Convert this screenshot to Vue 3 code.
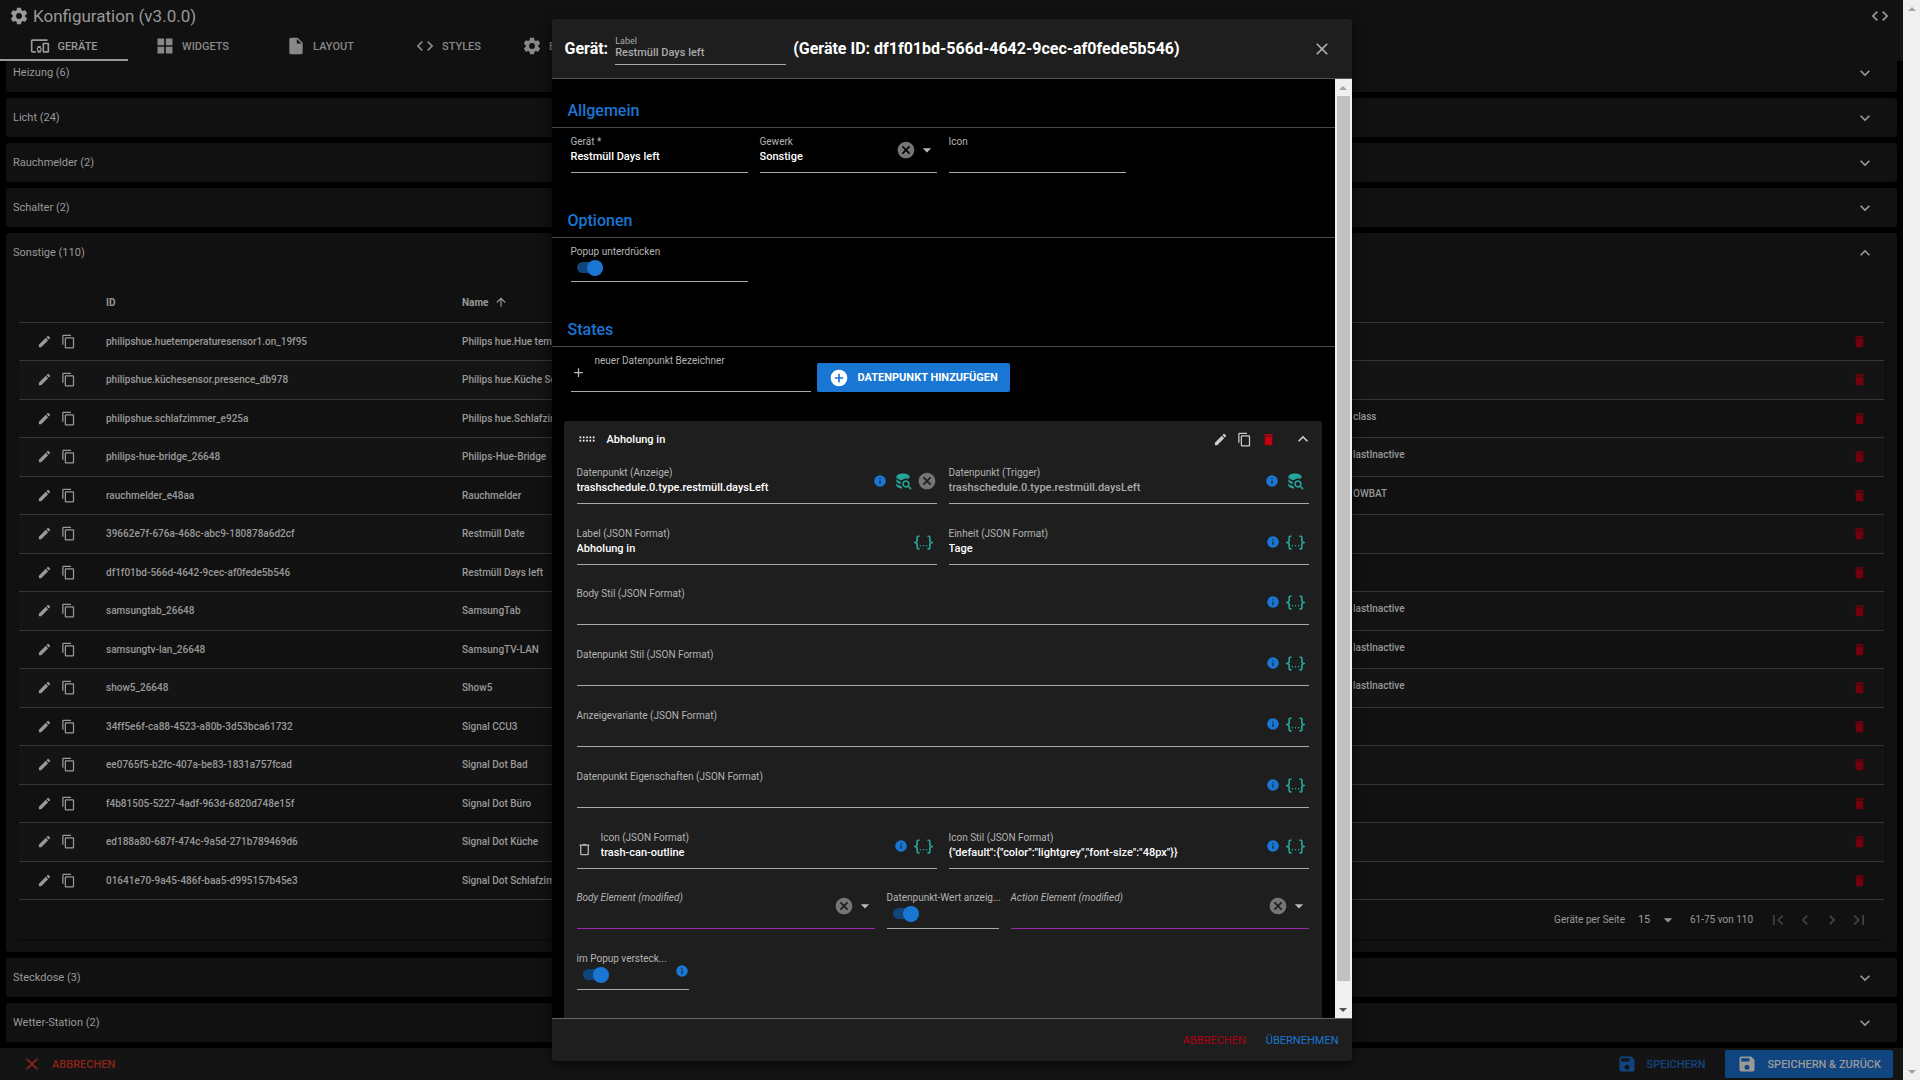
<script setup>
import { h, ref } from 'vue'

const paths = {
  cog: 'M12,15.5A3.5,3.5 0 0,1 8.5,12A3.5,3.5 0 0,1 12,8.5A3.5,3.5 0 0,1 15.5,12A3.5,3.5 0 0,1 12,15.5M19.43,12.97C19.47,12.65 19.5,12.33 19.5,12C19.5,11.67 19.47,11.34 19.43,11L21.54,9.37C21.73,9.22 21.78,8.95 21.66,8.73L19.66,5.27C19.54,5.05 19.27,4.96 19.05,5.05L16.56,6.05C16.04,5.66 15.5,5.32 14.87,5.07L14.5,2.42C14.46,2.18 14.25,2 14,2H10C9.75,2 9.54,2.18 9.5,2.42L9.13,5.07C8.5,5.32 7.96,5.66 7.44,6.05L4.95,5.05C4.73,4.96 4.46,5.05 4.34,5.27L2.34,8.73C2.21,8.95 2.27,9.22 2.46,9.37L4.57,11C4.53,11.34 4.5,11.67 4.5,12C4.5,12.33 4.53,12.65 4.57,12.97L2.46,14.63C2.27,14.78 2.21,15.05 2.34,15.27L4.34,18.73C4.46,18.95 4.73,19.03 4.95,18.95L7.44,17.94C7.96,18.34 8.5,18.68 9.13,18.93L9.5,21.58C9.54,21.82 9.75,22 10,22H14C14.25,22 14.46,21.82 14.5,21.58L14.87,18.93C15.5,18.67 16.04,18.34 16.56,17.94L19.05,18.95C19.27,19.03 19.54,18.95 19.66,18.73L21.66,15.27C21.78,15.05 21.73,14.78 21.54,14.63L19.43,12.97Z',
  devices: 'M3 6H21V4H3C1.9 4 1 4.9 1 6V18C1 19.1 1.9 20 3 20H7V18H3V6M13 12H9V13.78C8.39 14.33 8 15.11 8 16C8 16.89 8.39 17.67 9 18.22V20H13V18.22C13.61 17.67 14 16.88 14 16S13.61 14.33 13 13.78V12M11 17.5C10.17 17.5 9.5 16.83 9.5 16S10.17 14.5 11 14.5 12.5 15.17 12.5 16 11.83 17.5 11 17.5M22 8H16C15.5 8 15 8.5 15 9V19C15 19.5 15.5 20 16 20H22C22.5 20 23 19.5 23 19V9C23 8.5 22.5 8 22 8M21 18H17V10H21V18Z',
  grid: 'M3,11H11V3H3M3,21H11V13H3M13,21H21V13H13M13,3V11H21V3',
  file: 'M13,9V3.5L18.5,9M6,2C4.89,2 4,2.89 4,4V20A2,2 0 0,0 6,22H18A2,2 0 0,0 20,20V8L14,2H6Z',
  code: 'M14.6,16.6L19.2,12L14.6,7.4L16,6L22,12L16,18L14.6,16.6M9.4,16.6L4.8,12L9.4,7.4L8,6L2,12L8,18L9.4,16.6Z',
  down: 'M7.41,8.58L12,13.17L16.59,8.58L18,10L12,16L6,10L7.41,8.58Z',
  up: 'M7.41,15.41L12,10.83L16.59,15.41L18,14L12,8L6,14L7.41,15.41Z',
  left: 'M15.41,16.58L10.83,12L15.41,7.41L14,6L8,12L14,18L15.41,16.58Z',
  right: 'M8.59,16.58L13.17,12L8.59,7.41L10,6L16,12L10,18L8.59,16.58Z',
  first: 'M18.41,16.59L13.82,12L18.41,7.41L17,6L11,12L17,18L18.41,16.59M6,6H8V18H6V6Z',
  last: 'M5.59,7.41L10.18,12L5.59,16.59L7,18L13,12L7,6L5.59,7.41M16,6H18V18H16V6Z',
  arrowUp: 'M13,20H11V8L5.5,13.5L4.08,12.08L12,4.16L19.92,12.08L18.5,13.5L13,8V20Z',
  pencil: 'M20.71,7.04C21.1,6.65 21.1,6 20.71,5.63L18.37,3.29C18,2.9 17.35,2.9 16.96,3.29L15.12,5.12L18.87,8.87M3,17.25V21H6.75L17.81,9.93L14.06,6.18L3,17.25Z',
  copy: 'M19,21H8V7H19M19,5H8A2,2 0 0,0 6,7V21A2,2 0 0,0 8,23H19A2,2 0 0,0 21,21V7A2,2 0 0,0 19,5M16,1H4A2,2 0 0,0 2,3V17H4V3H16V1Z',
  trash: 'M19,4H15.5L14.5,3H9.5L8.5,4H5V6H19M6,19A2,2 0 0,0 8,21H16A2,2 0 0,0 18,19V7H6V19Z',
  trashOutline: 'M9,3V4H4V6H5V19A2,2 0 0,0 7,21H17A2,2 0 0,0 19,19V6H20V4H15V3H9M7,6H17V19H7V6Z',
  close: 'M19,6.41L17.59,5L12,10.59L6.41,5L5,6.41L10.59,12L5,17.59L6.41,19L12,13.41L17.59,19L19,17.59L13.41,12L19,6.41Z',
  plus: 'M19,13H13V19H11V13H5V11H11V5H13V11H19V13Z',
  plusCircle: 'M17,13H13V17H11V13H7V11H11V7H13V11H17M12,2A10,10 0 0,0 2,12A10,10 0 0,0 12,22A10,10 0 0,0 22,12A10,10 0 0,0 12,2Z',
  save: 'M15,9H5V5H15M12,19A3,3 0 0,1 9,16A3,3 0 0,1 12,13A3,3 0 0,1 15,16A3,3 0 0,1 12,19M17,3H5C3.89,3 3,3.9 3,5V19A2,2 0 0,0 5,21H19A2,2 0 0,0 21,19V7L17,3Z',
  info: 'M13,9H11V7H13M13,17H11V11H13M12,2A10,10 0 0,0 2,12A10,10 0 0,0 12,22A10,10 0 0,0 22,12A10,10 0 0,0 12,2Z',
  clear: 'M12,2C17.53,2 22,6.47 22,12C22,17.53 17.53,22 12,22C6.47,22 2,17.53 2,12C2,6.47 6.47,2 12,2M15.59,7L12,10.59L8.41,7L7,8.41L10.59,12L7,15.59L8.41,17L12,13.41L15.59,17L17,15.59L13.41,12L17,8.41L15.59,7Z',
  menuDown: 'M7,10L12,15L17,10H7Z',
  drag: 'M3,15V13H5V15H3M3,11V9H5V11H3M7,15V13H9V15H7M7,11V9H9V11H7M11,15V13H13V15H11M11,11V9H13V11H11M15,15V13H17V15H15M15,11V9H17V11H15M19,15V13H21V15H19M19,11V9H21V11H19Z',
  database: 'M18.68,12.32C16.92,10.56 14.07,10.57 12.32,12.33C10.56,14.09 10.56,16.94 12.32,18.69C13.81,20.17 16.11,20.43 17.89,19.32L21,22.39L22.39,21L19.3,17.89C20.43,16.12 20.17,13.8 18.68,12.32M17.27,17.27C16.29,18.25 14.71,18.24 13.73,17.27C12.76,16.29 12.76,14.71 13.74,13.73C14.71,12.76 16.29,12.76 17.27,13.73C18.24,14.71 18.24,16.29 17.27,17.27M10.9,20.1C10.25,19.44 9.74,18.65 9.42,17.78C6.27,17.25 4,15.76 4,14V17C4,19.21 7.58,21 12,21C11.6,20.74 11.23,20.44 10.9,20.1M4,9V12C4,13.68 6.07,15.12 9,15.7V15.5C9,14.57 9.2,13.65 9.58,12.81C6.34,12.3 4,10.79 4,9M12,3C7.58,3 4,4.79 4,7C4,9 7,10.68 10.85,11H10.9C12.1,9.74 13.76,9 15.5,9C16.41,9 17.31,9.19 18.14,9.56C19.17,9.09 19.87,8.12 20,7C20,4.79 16.42,3 12,3Z',
  json: 'M5,3H7V5H5V10A2,2 0 0,1 3,12A2,2 0 0,1 5,14V19H7V21H5C3.93,20.73 3,20.1 3,19V15A2,2 0 0,0 1,13H0V11H1A2,2 0 0,0 3,9V5A2,2 0 0,1 5,3M19,3A2,2 0 0,1 21,5V9A2,2 0 0,0 23,11H24V13H23A2,2 0 0,0 21,15V19A2,2 0 0,1 19,21H17V19H19V14A2,2 0 0,1 21,12A2,2 0 0,1 19,10V5H17V3H19M12,15A1,1 0 0,1 13,16A1,1 0 0,1 12,17A1,1 0 0,1 11,16A1,1 0 0,1 12,15M8,15A1,1 0 0,1 9,16A1,1 0 0,1 8,17A1,1 0 0,1 7,16A1,1 0 0,1 8,15M16,15A1,1 0 0,1 17,16A1,1 0 0,1 16,17A1,1 0 0,1 15,16A1,1 0 0,1 16,15Z'
}

const Icon = (props) =>
  h('svg', { viewBox: '0 0 24 24', width: props.size, height: props.size, fill: 'currentColor', 'aria-hidden': 'true' }, [
    h('path', { d: paths[props.name] })
  ])
Icon.props = { name: String, size: { type: Number, default: 20 } }

const tabs = [
  { icon: 'devices', label: 'GERÄTE' },
  { icon: 'grid', label: 'WIDGETS' },
  { icon: 'file', label: 'LAYOUT' },
  { icon: 'code', label: 'STYLES' },
  { icon: 'cog', label: 'EINSTELLUNGEN' }
]
const activeTab = ref('GERÄTE')

const groups = [
  { title: 'Heizung (6)' },
  { title: 'Licht (24)' },
  { title: 'Rauchmelder (2)' },
  { title: 'Schalter (2)' },
  { title: 'Sonstige (110)', open: true },
  { title: 'Steckdose (3)' },
  { title: 'Wetter-Station (2)' }
]

const devices = [
  ['philipshue.huetemperaturesensor1.on_19f95', 'Philips hue.Hue temperature', ''],
  ['philipshue.küchesensor.presence_db978', 'Philips hue.Küche Sensor', ''],
  ['philipshue.schlafzimmer_e925a', 'Philips hue.Schlafzimmer', 'class'],
  ['philips-hue-bridge_26648', 'Philips-Hue-Bridge', 'lastInactive'],
  ['rauchmelder_e48aa', 'Rauchmelder', 'OWBAT'],
  ['39662e7f-676a-468c-abc9-180878a6d2cf', 'Restmüll Date', ''],
  ['df1f01bd-566d-4642-9cec-af0fede5b546', 'Restmüll Days left', ''],
  ['samsungtab_26648', 'SamsungTab', 'lastInactive'],
  ['samsungtv-lan_26648', 'SamsungTV-LAN', 'lastInactive'],
  ['show5_26648', 'Show5', 'lastInactive'],
  ['34ff5e6f-ca88-4523-a80b-3d53bca61732', 'Signal CCU3', ''],
  ['ee0765f5-b2fc-407a-be83-1831a757fcad', 'Signal Dot Bad', ''],
  ['f4b81505-5227-4adf-963d-6820d748e15f', 'Signal Dot Büro', ''],
  ['ed188a80-687f-474c-9a5d-271b789469d6', 'Signal Dot Küche', ''],
  ['01641e70-9a45-486f-baa5-d995157b45e3', 'Signal Dot Schlafzimmer', '']
]

const jsonRow = (id, label) => ({
  fields: [{ id, label, value: '', span: 12, icons: ['info', 'json'] }]
})

const sections = [
  {
    title: 'Allgemein',
    rows: [{
      fields: [
        { id: 'geraet', label: 'Gerät *', value: 'Restmüll Days left', span: 3 },
        { id: 'gewerk', label: 'Gewerk', value: 'Sonstige', span: 3, type: 'select', icons: ['clear', 'menuDown'] },
        { id: 'icon', label: 'Icon', value: '', span: 3 }
      ]
    }]
  },
  {
    title: 'Optionen',
    rows: [{ fields: [{ id: 'popup', label: 'Popup unterdrücken', type: 'switch', span: 3 }] }]
  },
  {
    title: 'States',
    rows: [{
      action: 'DATENPUNKT HINZUFÜGEN',
      fields: [{ id: 'neu', label: 'neuer Datenpunkt Bezeichner', value: '', prepend: 'plus' }]
    }]
  },
  {
    card: 'Abholung in',
    rows: [
      {
        fields: [
          { id: 'dp-anzeige', label: 'Datenpunkt (Anzeige)', value: 'trashschedule.0.type.restmüll.daysLeft', span: 6, icons: ['info', 'database', 'clear'] },
          { id: 'dp-trigger', label: 'Datenpunkt (Trigger)', value: 'trashschedule.0.type.restmüll.daysLeft', span: 6, muted: true, icons: ['info', 'database'] }
        ]
      },
      {
        tight: true,
        fields: [
          { id: 'label-json', label: 'Label (JSON Format)', value: 'Abholung in', span: 6, icons: ['json'] },
          { id: 'einheit', label: 'Einheit (JSON Format)', value: 'Tage', span: 6, icons: ['info', 'json'] }
        ]
      },
      jsonRow('body-stil', 'Body Stil (JSON Format)'),
      jsonRow('dp-stil', 'Datenpunkt Stil (JSON Format)'),
      jsonRow('variante', 'Anzeigevariante (JSON Format)'),
      jsonRow('eigenschaften', 'Datenpunkt Eigenschaften (JSON Format)'),
      {
        tight: true,
        fields: [
          { id: 'icon-json', label: 'Icon (JSON Format)', value: 'trash-can-outline', span: 6, prepend: 'trashOutline', icons: ['info', 'json'] },
          { id: 'icon-stil', label: 'Icon Stil (JSON Format)', value: '{"default":{"color":"lightgrey","font-size":"48px"}}', span: 6, icons: ['info', 'json'] }
        ]
      },
      {
        fields: [
          { id: 'body-element', label: 'Body Element (modified)', value: '', span: 5, type: 'select', modified: true, icons: ['clear', 'menuDown'] },
          { id: 'wert', label: 'Datenpunkt-Wert anzeig...', type: 'switch', span: 2 },
          { id: 'action-element', label: 'Action Element (modified)', value: '', span: 5, type: 'select', modified: true, icons: ['clear', 'menuDown'] }
        ]
      },
      {
        fields: [{ id: 'versteckt', label: 'im Popup versteck...', type: 'switch', span: 2, icons: ['info'] }]
      }
    ]
  }
]

const iconSize = { info: 14, json: 19, database: 20, clear: 20 }
</script>

<template>
  <div class="app">
    <div class="page">
      <header class="topbar">
        <div class="brand">
          <Icon name="cog" />
          <h1>Konfiguration (v3.0.0)</h1>
          <button type="button" class="icon-btn code-btn" aria-label="Code"><Icon name="code" /></button>
        </div>
        <nav class="tabs">
          <button
            v-for="tab in tabs" :key="tab.label" type="button" class="tab"
            :class="{ active: tab.label === activeTab }" @click="activeTab = tab.label"
          >
            <Icon :name="tab.icon" /><span>{{ tab.label }}</span>
          </button>
        </nav>
      </header>

      <main class="content">
        <div class="groups">
          <section v-for="g in groups" :key="g.title" class="group">
            <button type="button" class="group-head">
              <span>{{ g.title }}</span><Icon :name="g.open ? 'up' : 'down'" />
            </button>
            <div v-if="g.open" class="table-card">
              <table>
                <colgroup><col class="c-tools"><col class="c-id"><col class="c-name"><col></colgroup>
                <thead>
                  <tr>
                    <th></th>
                    <th>ID</th>
                    <th><span class="sort">Name <Icon name="arrowUp" :size="14" /></span></th>
                    <th></th>
                  </tr>
                </thead>
                <tbody>
                  <tr v-for="d in devices" :key="d[0]">
                    <td>
                      <div class="tools">
                        <button type="button" class="icon-btn" aria-label="Bearbeiten"><Icon name="pencil" :size="15" /></button>
                        <button type="button" class="icon-btn" aria-label="Kopieren"><Icon name="copy" :size="15" /></button>
                      </div>
                    </td>
                    <td>{{ d[0] }}</td>
                    <td>{{ d[1] }}</td>
                    <td>
                      <div class="last">
                        <span>{{ d[2] }}</span>
                        <button type="button" class="icon-btn danger" aria-label="Löschen"><Icon name="trash" :size="15" /></button>
                      </div>
                    </td>
                  </tr>
                </tbody>
              </table>
              <div class="pager">
                <label for="per-page">Geräte per Seite</label>
                <span class="per-page">
                  <select id="per-page"><option>15</option></select>
                  <Icon name="menuDown" />
                </span>
                <span class="range">61-75 von 110</span>
                <button v-for="n in ['first', 'left', 'right', 'last']" :key="n" type="button" class="icon-btn page-btn" :aria-label="n">
                  <Icon :name="n" />
                </button>
              </div>
            </div>
          </section>
        </div>
      </main>

      <footer class="bottombar">
        <button type="button" class="flat cancel"><Icon name="close" /><span>ABBRECHEN</span></button>
        <button type="button" class="flat save"><Icon name="save" /><span>SPEICHERN</span></button>
        <button type="button" class="flat save-back"><Icon name="save" /><span>SPEICHERN &amp; ZURÜCK</span></button>
      </footer>

      <div class="overlay">
        <div class="dialog" role="dialog" aria-modal="true" aria-labelledby="dialog-title">
          <div class="dialog-head">
            <h2 id="dialog-title">Gerät:</h2>
            <div class="title-field">
              <label for="title-label">Label</label>
              <input id="title-label" type="text" value="Restmüll Days left">
            </div>
            <h2>(Geräte ID: df1f01bd-566d-4642-9cec-af0fede5b546)</h2>
            <button type="button" class="icon-btn close-btn" aria-label="Schließen"><Icon name="close" /></button>
          </div>

          <div class="dialog-body">
            <div class="form">
              <section v-for="(s, si) in sections" :key="si" :class="s.card ? 'card' : 'section'">
                <h3 v-if="s.title">{{ s.title }}</h3>
                <div v-else class="card-head">
                  <Icon name="drag" />
                  <h4>{{ s.card }}</h4>
                  <button type="button" class="icon-btn" aria-label="Bearbeiten"><Icon name="pencil" :size="15" /></button>
                  <button type="button" class="icon-btn" aria-label="Kopieren"><Icon name="copy" :size="15" /></button>
                  <button type="button" class="icon-btn danger" aria-label="Löschen"><Icon name="trash" :size="15" /></button>
                  <button type="button" class="icon-btn fold" aria-label="Einklappen"><Icon name="up" /></button>
                </div>

                <div class="rows">
                  <div v-for="(row, ri) in s.rows" :key="ri" class="row" :class="{ tight: row.tight, inline: row.action }">
                    <div
                      v-for="f in row.fields" :key="f.id" class="field"
                      :class="['span-' + (f.span || 0), f.type, { modified: f.modified, muted: f.muted }]"
                    >
                      <Icon v-if="f.prepend" :name="f.prepend" :size="15" class="prepend" />
                      <div class="control">
                        <label :for="f.id">{{ f.label }}</label>
                        <input v-if="f.type === 'switch'" :id="f.id" type="checkbox" role="switch" checked>
                        <select v-else-if="f.type === 'select'" :id="f.id"><option>{{ f.value }}</option></select>
                        <input v-else :id="f.id" type="text" :value="f.value">
                      </div>
                      <div v-if="f.icons" class="icons">
                        <template v-for="i in f.icons" :key="i">
                          <Icon v-if="i === 'menuDown'" :name="i" class="i-menuDown" />
                          <button v-else type="button" class="icon-btn" :class="'i-' + i" :aria-label="i">
                            <Icon :name="i" :size="iconSize[i]" />
                          </button>
                        </template>
                      </div>
                    </div>
                    <button v-if="row.action" type="button" class="add-btn"><Icon name="plusCircle" /><span>{{ row.action }}</span></button>
                  </div>
                </div>
              </section>
            </div>
            <div class="scrollbar" aria-hidden="true">
              <span class="arrow-up"></span>
              <span class="thumb"></span>
              <span class="arrow-down dark"></span>
            </div>
          </div>

          <div class="dialog-foot">
            <button type="button" class="text-btn danger">ABBRECHEN</button>
            <button type="button" class="text-btn primary">ÜBERNEHMEN</button>
          </div>
        </div>
      </div>
    </div>

    <div class="scrollbar" aria-hidden="true">
      <span class="arrow-up"></span>
      <span class="arrow-down"></span>
    </div>
  </div>
</template>

<style>
body { margin: 0; background: #000; }
</style>

<style scoped>
.app {
  display: flex;
  height: 100vh;
  overflow: hidden;
  background: #000;
  color: #999;
  font-family: Roboto, sans-serif;
  font-size: 11px;
}
.app *, .app *::before { box-sizing: border-box; }
button, input, select { font-family: inherit; font-size: inherit; color: inherit; background: none; border: 0; padding: 0; margin: 0; border-radius: 0; outline: 0; }
button { cursor: pointer; }
select { appearance: none; }
svg { display: block; flex: none; }
h1, h2, h3, h4 { margin: 0; }
.icon-btn { display: flex; align-items: center; justify-content: center; flex: none; }

.page { position: relative; display: flex; flex-direction: column; flex: 1; min-width: 0; }

.topbar { position: relative; height: 61px; flex: none; background: #111; }
.brand { display: flex; align-items: center; height: 31px; padding: 0 13px 0 9px; gap: 4px; }
.brand h1 { flex: 1; font-size: 17px; font-weight: 400; }
.tabs { display: flex; height: 30px; }
.tab { display: flex; align-items: center; justify-content: center; gap: 7px; min-width: 128px; padding: 2px 10px 0; font-weight: 500; color: #888; border-bottom: 2px solid transparent; }
.tab.active { color: #999; border-color: #999; }

.content { flex: 1; min-height: 0; overflow: hidden; padding: 0 6px; }
.groups { display: flex; flex-direction: column; gap: 6px; margin-top: -8px; }
.group { background: #111; border-radius: 3px; }
.group-head { display: flex; align-items: center; justify-content: space-between; width: 100%; height: 39px; padding: 0 22px 0 7px; }
.table-card { margin: 11px 13px 0; border-radius: 3px; box-shadow: 0 1px 2px #0008; }
.group:has(.table-card) { padding-bottom: 13px; }

table { width: 100%; table-layout: fixed; border-spacing: 0; font-size: 10px; }
.c-tools { width: 78px; }
.c-id { width: 356px; }
.c-name { width: 891px; }
th, td { height: 38px; padding: 0 8px 1px 9px; border-bottom: 1px solid #363636; text-align: left; white-space: nowrap; }
th { height: 40px; font-weight: 700; }
td { font-weight: 500; }
tbody tr:nth-child(even) { background: #141414; }
tbody tr:nth-child(even) td { height: 39px; padding-bottom: 2px; }
.sort { display: flex; align-items: center; gap: 6px; }
.tools { display: flex; gap: 9px; padding-left: 9px; }
.last { display: flex; justify-content: space-between; padding-right: 9px; }
.danger { color: #b71c1c; }
td .danger { color: #74000d; }

.pager { display: flex; align-items: center; justify-content: flex-end; height: 39px; padding-right: 12px; font-size: 10px; }
.per-page { display: flex; align-items: center; gap: 6px; margin: 0 12px 0 13px; }
.per-page select { width: 14px; font-size: 11px; }
.range { margin-right: 11px; }
.page-btn { width: 27px; color: #444; }

.bottombar { display: flex; align-items: center; height: 32px; flex: none; background: #141414; padding: 0 10px 0 22px; }
.flat { display: flex; align-items: center; gap: 10px; height: 28px; padding: 0 12px; font-weight: 500; }
.cancel { margin-right: auto; padding: 0; color: #8f221a; }
.save { color: #114580; padding-right: 20px; }
.save-back { background: #114580; color: #999; border-radius: 2px; }

.overlay { position: absolute; inset: 0; display: flex; justify-content: center; padding: 19px 0; }
.dialog { display: flex; flex-direction: column; width: 100%; max-width: 800px; background: #1e1e1e; border-radius: 3px; overflow: hidden; box-shadow: 0 4px 12px #000a; }
.dialog-head { display: flex; align-items: center; height: 60px; flex: none; padding: 0 20px 0 13px; border-bottom: 1px solid #555; color: #fff; }
.dialog-head h2 { font-size: 16px; font-weight: 700; }
.title-field { display: flex; flex-direction: column; width: 171px; margin: 4px 7px 0; padding-bottom: 4px; border-bottom: 1px solid #aaa; color: #aaa; }
.title-field label { font-size: 9px; line-height: 10px; }
.title-field input { height: 14px; line-height: 14px; font-weight: 500; }
.close-btn { margin-left: auto; color: #aaa; }

.dialog-body { display: flex; flex: 1; min-height: 0; background: #000; }
.form { flex: 1; min-width: 0; overflow: hidden; }
.section h3 { display: flex; align-items: center; height: 49px; padding: 14px 16px 0; border-bottom: 1px solid #484848; font-size: 16px; font-weight: 500; color: #1976d2; }
.section .rows { padding: 7px 20px 16px 19px; }
.row { display: grid; grid-template-columns: repeat(12, minmax(0, 1fr)); column-gap: 12px; }
.row.inline { display: flex; column-gap: 6px; align-items: flex-end; }
.field { display: flex; height: 38px; padding-bottom: 7px; border-bottom: 1px solid #aaa; color: #fff; }
.section .field.switch { height: 37px; }
.span-0 { width: 240px; }
.span-2 { grid-column: span 2; }
.span-3 { grid-column: span 3; }
.span-5 { grid-column: span 5; }
.span-6 { grid-column: span 6; }
.span-12 { grid-column: span 12; }
.muted { color: #aaa; }
.prepend { align-self: flex-end; margin-right: 9px; margin-bottom: 4px; color: #bbb; }
.control { display: flex; flex-direction: column; flex: 1; min-width: 0; }
.control label { font-size: 10px; line-height: 14px; color: #b4b4b4; white-space: nowrap; }
.control input[type="text"], .control select { width: 100%; height: 15px; line-height: 15px; font-weight: 500; }
.modified { border-color: #9c27b0; }
.modified label { font-style: italic; }
.icons { display: flex; align-items: center; gap: 4px; padding: 0 4px; color: #26a69a; }
.select .icons { gap: 1px; }
.icons:has(.i-clear) { padding-right: 0; }
.i-info { width: 18px; color: #1976d2; }
.switch .icons { align-items: flex-end; padding: 0 0 4px; }
.switch .i-info { width: 14px; }
.i-clear { color: #757575; }
.i-menuDown { color: #bbb; }

.control input[type="checkbox"] { appearance: none; display: flex; align-items: center; justify-content: flex-end; width: 26px; height: 11px; margin: 3px 0 0 6px; border-radius: 6px; background: #104579; }
.control input[type="checkbox"]::before { content: ""; flex: none; width: 16px; height: 16px; border-radius: 50%; background: #1976d2; }

.add-btn { display: flex; align-items: center; gap: 9px; height: 29px; padding: 0 12px; background: #1976d2; color: #fff; border-radius: 2px; font-weight: 700; }

.card { margin: 13px 13px 0 12px; padding: 0 13px 40px; background: #1e1e1e; border-radius: 3px; }
.card-head { display: flex; align-items: center; height: 36px; color: #fff; }
.card-head h4 { flex: 1; margin-left: 10px; font-size: 11px; font-weight: 500; }
.card-head .icon-btn { width: 24px; color: #ccc; }
.card-head .danger { color: #c40012; }
.card-head .fold { margin-left: 10px; margin-right: -6px; }
.card .rows { padding-top: 9px; }
.card .row { height: 61px; }
.card .row.tight { height: 60px; }

.scrollbar { display: flex; flex-direction: column; justify-content: space-between; align-items: center; width: 17px; flex: none; background: #f0f0f0; }
.thumb { flex: 1; width: 13px; margin-bottom: 20px; background: #c1c1c1; }
.arrow-up, .arrow-down { display: flex; align-items: center; justify-content: center; width: 17px; height: 17px; flex: none; }
.arrow-up::before, .arrow-down::before { content: ""; border: 4px solid transparent; border-top-width: 0; border-bottom: 4px solid #a3a3a3; }
.arrow-down::before { border-bottom-width: 0; border-top: 4px solid #a3a3a3; }
.arrow-down.dark::before { border-top-color: #505050; }

.dialog-foot { display: flex; align-items: center; justify-content: flex-end; gap: 20px; height: 43px; flex: none; padding: 0 13px; border-top: 1px solid #666; }
.text-btn.danger { color: #b00013; }
.text-btn.primary { color: #1976d2; }
</style>
